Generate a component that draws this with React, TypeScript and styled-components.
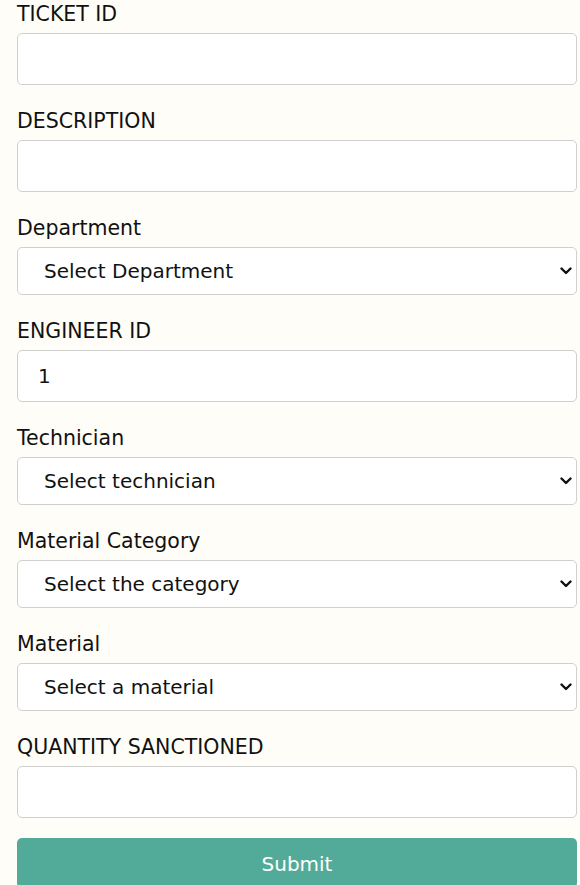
import React from 'react';
import styled, { createGlobalStyle } from 'styled-components';

const GlobalStyle = createGlobalStyle`
  html, body {
    margin: 0;
    padding: 0;
    background: #fffdf8;
  }
  body {
    font-family: 'DejaVu Sans', Verdana, sans-serif;
    color: #111;
  }
`;

const chevron =
  "url(\"data:image/svg+xml;utf8,<svg xmlns='http://www.w3.org/2000/svg' width='12' height='8' viewBox='0 0 12 8'><path d='M1.5 1.5 L6 6 L10.5 1.5' fill='none' stroke='%23111' stroke-width='2.4' stroke-linecap='round' stroke-linejoin='round'/></svg>\")";

const Form = styled.form`
  display: flex;
  flex-direction: column;
  width: 560px;
  padding-left: 17px;
`;

const Field = styled.div`
  display: flex;
  flex-direction: column;
  margin-bottom: 22px;

  &:last-of-type {
    margin-bottom: 20px;
  }
`;

const Label = styled.label`
  font-size: 20.5px;
  line-height: 24px;
  padding-top: 2px;
  margin-bottom: 7px;
`;

const Input = styled.input`
  box-sizing: border-box;
  height: 52px;
  width: 100%;
  padding: 0 20px;
  border: 1px solid #cfcfcf;
  border-radius: 5px;
  background: #fff;
  font-family: 'DejaVu Sans', Verdana, sans-serif;
  font-size: 20px;
  color: #111;
  outline: none;
`;

const Select = styled.select`
  box-sizing: border-box;
  appearance: none;
  height: 48px;
  width: 100%;
  padding: 0 40px 0 26px;
  border: 1px solid #cfcfcf;
  border-radius: 5px;
  background: #fff ${chevron} no-repeat right 4px center;
  font-family: 'DejaVu Sans', Verdana, sans-serif;
  font-size: 20px;
  color: #111;
  outline: none;
`;

const SubmitButton = styled.button`
  height: 50px;
  width: 100%;
  border: none;
  border-radius: 5px;
  background: #52ab98;
  color: #fff;
  font-family: 'DejaVu Sans', Verdana, sans-serif;
  font-size: 20px;
  padding-top: 2px;
  cursor: pointer;
`;

const App: React.FC = () => {
  return (
    <>
      <GlobalStyle />
      <Form onSubmit={(e) => e.preventDefault()}>
        <Field>
          <Label>TICKET ID</Label>
          <Input type="text" />
        </Field>
        <Field>
          <Label>DESCRIPTION</Label>
          <Input type="text" />
        </Field>
        <Field>
          <Label>Department</Label>
          <Select defaultValue="">
            <option value="">Select Department</option>
          </Select>
        </Field>
        <Field>
          <Label>ENGINEER ID</Label>
          <Input type="text" defaultValue="1" />
        </Field>
        <Field>
          <Label>Technician</Label>
          <Select defaultValue="">
            <option value="">Select technician</option>
          </Select>
        </Field>
        <Field>
          <Label>Material Category</Label>
          <Select defaultValue="">
            <option value="">Select the category</option>
          </Select>
        </Field>
        <Field>
          <Label>Material</Label>
          <Select defaultValue="">
            <option value="">Select a material</option>
          </Select>
        </Field>
        <Field>
          <Label>QUANTITY SANCTIONED</Label>
          <Input type="number" />
        </Field>
        <SubmitButton type="submit">Submit</SubmitButton>
      </Form>
    </>
  );
};

export default App;
